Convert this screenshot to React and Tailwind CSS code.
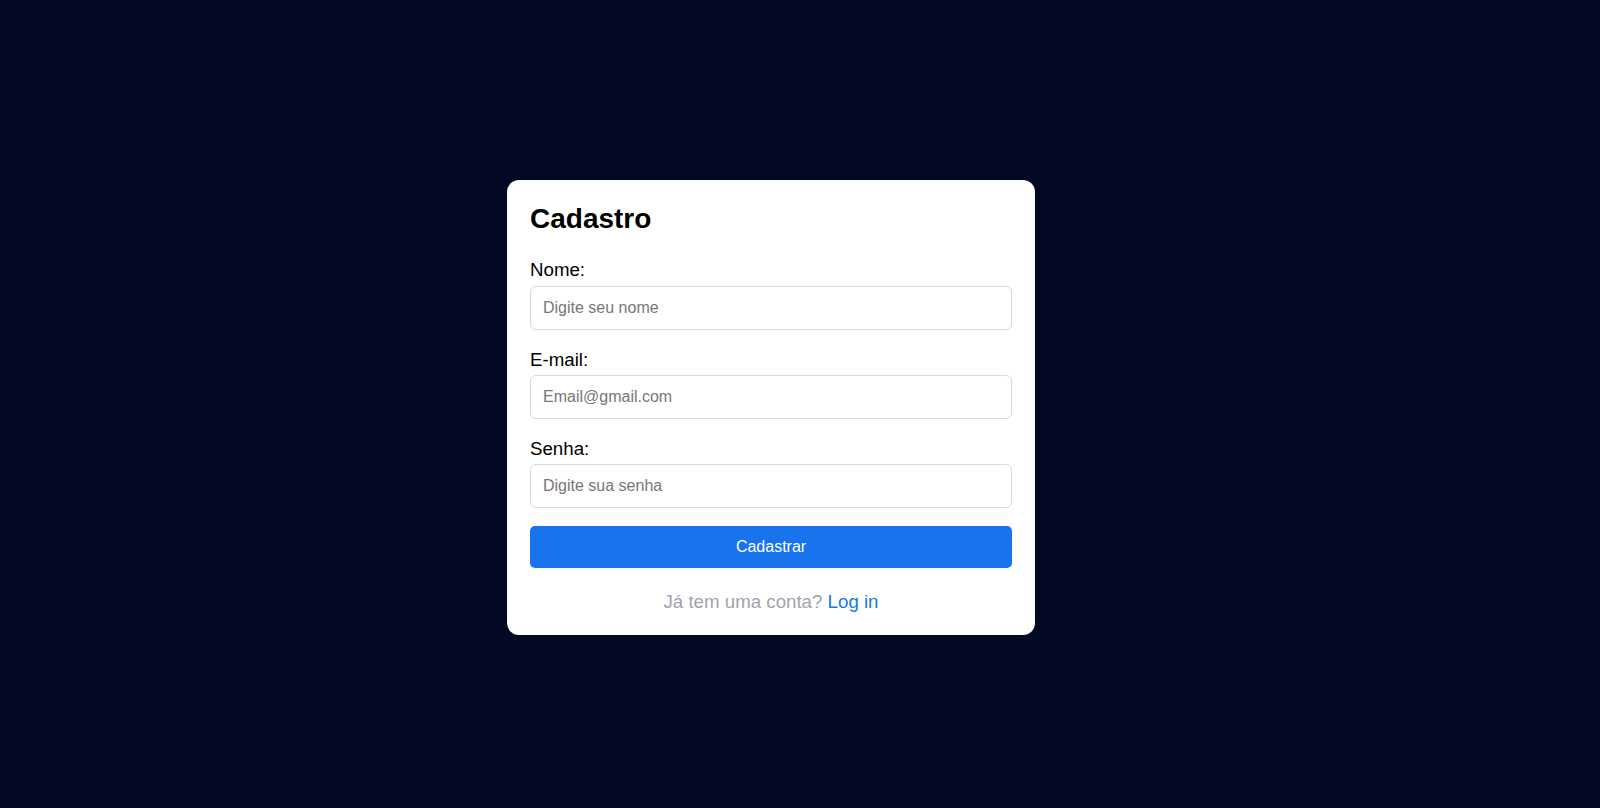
import React from "react";

export default function App() {
  const font = { fontFamily: '"Liberation Sans", Arial, sans-serif' };
  return (
    <div
      className="w-full h-[808px] bg-[#030923] flex items-center justify-center pr-[58px] pt-[7px]"
      style={font}
    >
      <div className="w-[528px] bg-white rounded-[12px] p-[23px] flex flex-col">
        <h1 className="text-[28px] font-bold leading-[32px] text-black m-0 mb-[24px]">Cadastro</h1>

        <div className="flex flex-col mb-[19px]">
          <label className="text-[18.7px] leading-[21px] text-black mb-[6px]">Nome:</label>
          <input
            type="text"
            placeholder="Digite seu nome"
            className="h-[44px] w-full border border-[#d9d9d9] rounded-[6px] px-[12px] text-[16px] text-black placeholder:text-[#777] outline-none"
          />
        </div>

        <div className="flex flex-col mb-[19px]">
          <label className="text-[18.7px] leading-[21px] text-black mb-[5px]">E-mail:</label>
          <input
            type="email"
            placeholder="Email@gmail.com"
            className="h-[44px] w-full border border-[#d9d9d9] rounded-[6px] px-[12px] text-[16px] text-black placeholder:text-[#777] outline-none"
          />
        </div>

        <div className="flex flex-col mb-[18px]">
          <label className="text-[18.7px] leading-[21px] text-black mb-[5px]">Senha:</label>
          <input
            type="password"
            placeholder="Digite sua senha"
            className="h-[44px] w-full border border-[#d9d9d9] rounded-[6px] px-[12px] text-[16px] text-black placeholder:text-[#777] outline-none"
          />
        </div>

        <button className="h-[42px] w-full bg-[#1873ec] text-white text-[16px] rounded-[5px]">
          Cadastrar
        </button>

        <p className="mt-[23px] text-center text-[18.7px] leading-[21px] text-[#9ea3ae]">
          Já tem uma conta? <a className="text-[#1877e6] cursor-pointer">Log in</a>
        </p>
      </div>
    </div>
  );
}
